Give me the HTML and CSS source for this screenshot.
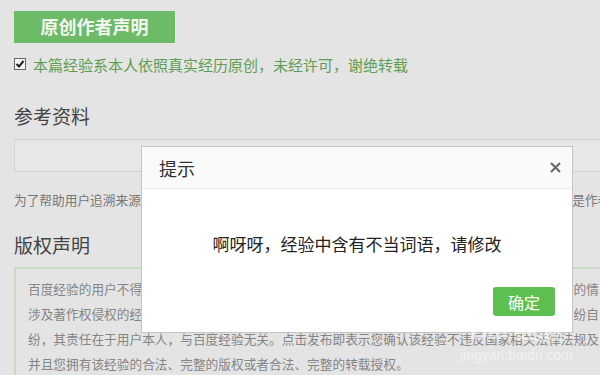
FILE: index.html
```html
<!DOCTYPE html>
<html lang="zh-CN">
<head>
  <meta charset="UTF-8">
  <title>发布经验</title>
  <link rel="stylesheet" href="styles.css">
</head>
<body>
  <div class="page">
    <div class="orig-btn">原创作者声明</div>

    <label class="orig-check">
      <span class="checkbox">
        <svg width="10" height="10" viewBox="0 0 10 10"><path d="M1.5 5 L4 7.5 L8.5 2" fill="none" stroke="#222" stroke-width="2"/></svg>
      </span>
      本篇经验系本人依照真实经历原创，未经许可，谢绝转载
    </label>

    <h2 class="section-title">参考资料</h2>
    <div class="ref-input"></div>
    <p class="hint">为了帮助用户追溯来源，请在这里填写经验中引用内容的出处链接，若经验的内容均为原创，请注明是作者原创内容</p>

    <h2 class="section-title copyright-title">版权声明</h2>
    <div class="copyright-box">
      <p>百度经验的用户不得在百度经验中发布侵犯他人著作权的内容，如发生侵犯他人著作权或其他权利的情况，</p>
      <p>涉及著作权侵权的经验将被删除，因侵犯他人著作权或其他权利而引发的一切法律责任、后果及纠纷自负，</p>
      <p>纷，其责任在于用户本人，与百度经验无关。点击发布即表示您确认该经验不违反国家相关法律法规及</p>
      <p>并且您拥有该经验的合法、完整的版权或者合法、完整的转载授权。</p>
    </div>
  </div>

  <div class="dialog">
    <div class="dialog-head">
      <span class="dialog-title">提示</span>
      <span class="dialog-close">
        <svg width="11" height="11" viewBox="0 0 11 11"><path d="M1 1 L10 10 M10 1 L1 10" stroke="#666" stroke-width="2"/></svg>
      </span>
    </div>
    <div class="dialog-body">
      <p class="dialog-msg">啊呀呀，经验中含有不当词语，请修改</p>
      <div class="dialog-foot">
        <button class="ok-btn">确定</button>
      </div>
    </div>
  </div>

  <div class="watermark">
    <span class="wm-logo">Bai 经验</span>
    <span class="wm-url">jingyan.baidu.com</span>
  </div>
</body>
</html>
```

FILE: styles.css
```css
* {
  box-sizing: border-box;
}

html, body {
  margin: 0;
  height: 100%;
  overflow: hidden;
}

body {
  background-color: #e4e4e4;
  font-family: "Noto Sans CJK SC", "Noto Sans", sans-serif;
  color: #444;
}

.page {
  width: 700px;
  padding: 11px 0 0 14px;
}

.orig-btn {
  width: 161px;
  height: 32px;
  line-height: 31px;
  background-color: #6dba67;
  color: #f2f7f0;
  font-size: 18px;
  font-weight: bold;
  text-align: center;
}

.orig-check {
  display: flex;
  align-items: center;
  gap: 7px;
  margin-top: 11px;
  height: 20px;
  font-size: 15px;
  color: #5f9e52;
  white-space: nowrap;
}

.checkbox {
  width: 12px;
  height: 12px;
  border: 1px solid #666;
  background-color: #f4f4f4;
  display: flex;
  align-items: center;
  justify-content: center;
}

.section-title {
  margin: 28px 0 0;
  font-size: 19px;
  font-weight: normal;
  line-height: 28px;
  color: #444;
}

.ref-input {
  margin-top: 9px;
  height: 33px;
  border: 1px solid #d2d2d2;
  background-color: #e7e7e7;
}

.hint {
  margin: 18px 0 0;
  font-size: 12.7px;
  line-height: 20px;
  color: #777;
  white-space: nowrap;
}

.copyright-title {
  margin-top: 21px;
}

.copyright-box {
  margin-top: 8px;
  border: 2px solid #c8dac3;
  padding: 7px 12px 10px;
  height: 120px;
}

.copyright-box p {
  margin: 0;
  font-size: 12.7px;
  line-height: 25px;
  color: #858585;
  white-space: nowrap;
}

/* dialog lies over the page */
.dialog {
  position: absolute;
  top: 146px;
  left: 141px;
  width: 432px;
  height: 187px;
  background-color: #fff;
  border: 1px solid #c4c4c4;
}

.dialog-head {
  height: 42px;
  background-color: #fafafa;
  border-bottom: 1px solid #ececec;
  display: flex;
  align-items: center;
  justify-content: space-between;
  padding: 0 11px 0 17px;
}

.dialog-title {
  font-size: 18px;
  color: #333;
}

.dialog-close {
  display: flex;
}

.dialog-body {
  padding: 40px 17px 0;
}

.dialog-msg {
  margin: 0;
  text-align: center;
  font-size: 17px;
  line-height: 30px;
  color: #222;
}

.dialog-foot {
  display: flex;
  justify-content: flex-end;
  margin-top: 28px;
}

.ok-btn {
  width: 62px;
  height: 29px;
  border: none;
  border-radius: 3px;
  background-color: #5cbf50;
  color: #fff;
  font-family: inherit;
  font-size: 16px;
  padding: 0;
}

/* faint site watermark over the corner */
.watermark {
  position: absolute;
  left: 460px;
  top: 316px;
  display: flex;
  flex-direction: column;
  align-items: center;
  color: rgba(255, 255, 255, 0.5);
  pointer-events: none;
}

.wm-logo {
  font-family: "Liberation Sans", sans-serif;
  font-size: 24px;
  font-weight: bold;
  line-height: 30px;
}

.wm-url {
  font-family: "Liberation Sans", sans-serif;
  font-size: 14px;
  line-height: 18px;
}
```
